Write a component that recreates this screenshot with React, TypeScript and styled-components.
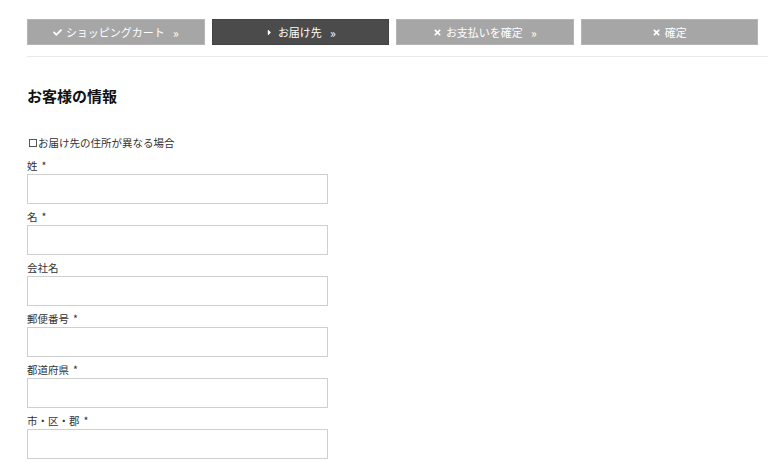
import React from 'react'
import styled, { createGlobalStyle } from 'styled-components'
import { FaCheck, FaCaretRight, FaTimes } from 'react-icons/fa'

const GlobalStyle = createGlobalStyle`
    body {
        margin: 0;
        background: #fff;
        font-family: "Noto Sans CJK JP", "Noto Sans", sans-serif;
        color: #333;
    }
`
const Page = styled.div`
    padding: 19px 10px 0 27px;
`
const Steps = styled.div`
    display: grid;
    grid-template-columns: repeat(4, 177.5px);
    gap: 7px;
    padding-bottom: 11px;
    border-bottom: 1px solid #e8e8e8;
`
const Step = styled.div<{ $active?: boolean }>`
    height: 26px;
    display: flex;
    align-items: center;
    justify-content: center;
    gap: 4px;
    background: ${p => (p.$active ? '#4b4b4b' : '#a6a6a6')};
    border: 1px solid ${p => (p.$active ? '#444' : '#b4b4b4')};
    box-sizing: border-box;
    color: #fff;
    font-size: 11px;
    > svg {
        font-size: 9px;
    }
`
const Arrow = styled.span`
    margin-left: 4px;
    font-size: 12px;
`
const Title = styled.h2`
    margin: 29px 0 30px;
    font-size: 15px;
    line-height: 20px;
    font-weight: bold;
    color: #111;
`
const CheckRow = styled.label`
    display: flex;
    align-items: center;
    font-size: 10.5px;
    line-height: 14px;
    color: #333;
    margin-bottom: 11px;
`
const Check = styled.input`
    appearance: none;
    width: 8px;
    height: 8px;
    margin: 0 1px 0 2px;
    border: 1px solid #555;
    background: #fff;
`
const Field = styled.div`
    display: flex;
    flex-direction: column;
    margin-bottom: 8px;
`
const Label = styled.label`
    font-size: 10.5px;
    line-height: 10px;
    margin-bottom: 3px;
    color: #333;
`
const Required = styled.span`
    margin-left: 4px;
`
const Input = styled.input`
    width: 301px;
    height: 30px;
    box-sizing: border-box;
    border: 1px solid #cfcfcf;
    background: #fff;
    &:focus {
        outline: none;
    }
`

const fields = [
    { name: '姓', required: true },
    { name: '名', required: true },
    { name: '会社名', required: false },
    { name: '郵便番号', required: true },
    { name: '都道府県', required: true },
    { name: '市・区・郡', required: true },
]

export default function App() {
    return (
        <>
            <GlobalStyle />
            <Page>
                <Steps>
                    <Step><FaCheck />ショッピングカート<Arrow>»</Arrow></Step>
                    <Step $active><FaCaretRight />お届け先<Arrow>»</Arrow></Step>
                    <Step><FaTimes />お支払いを確定<Arrow>»</Arrow></Step>
                    <Step><FaTimes />確定</Step>
                </Steps>
                <Title>お客様の情報</Title>
                <CheckRow><Check type="checkbox" />お届け先の住所が異なる場合</CheckRow>
                {fields.map(f => (
                    <Field key={f.name}>
                        <Label>{f.name}{f.required && <Required>*</Required>}</Label>
                        <Input type="text" />
                    </Field>
                ))}
            </Page>
        </>
    )
}
